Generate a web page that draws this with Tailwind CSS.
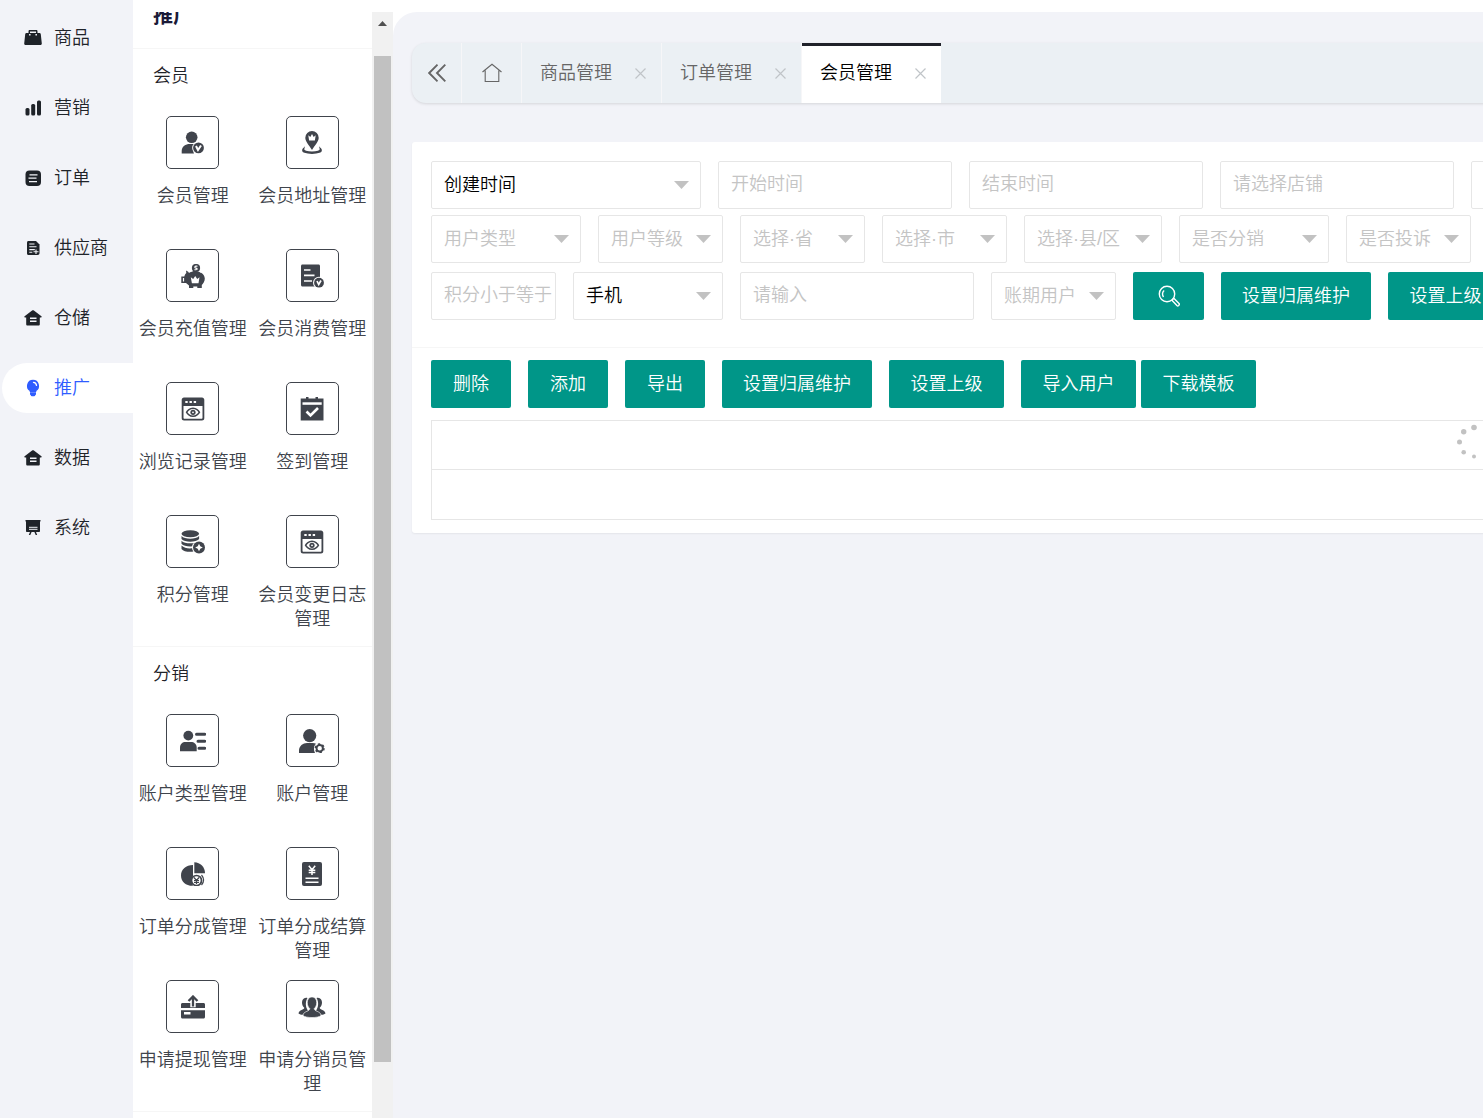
<!DOCTYPE html>
<html lang="zh-CN">
<head>
<meta charset="utf-8">
<title>会员管理</title>
<script src="https://cdn.jsdelivr.net/npm/@tailwindcss/browser@4"></script>
</head>
<body class="h-screen overflow-hidden bg-[#f2f3f8] font-['Liberation_Sans','Noto_Sans_CJK_SC',sans-serif] text-[18px] leading-6 font-[350] text-[#1f2329]">
<div class="flex h-full">

  <!-- Primary navigation -->
  <nav class="flex w-[133px] shrink-0 flex-col gap-5 pt-[13px] pl-0.5">
    <a href="#" class="flex h-[50px] shrink-0 items-center gap-3 rounded-l-full pl-[22px]">
      <svg class="size-[18px]" viewBox="0 0 18 18" fill="currentColor"><path d="M4.500 4V2.200C4.500 1.500 5 1 5.700 1h6.600c.7 0 1.200.5 1.200 1.200V4h1.800c.8 0 1.400.5 1.500 1.300l1 9.200c.1.900-.5 1.500-1.400 1.500H1.600C.7 16 .1 15.400.2 14.500l1-9.200C1.300 4.500 1.900 4 2.700 4zM6 4h6V2.500H6z"/><path d="M5.800 5v1.500M12.200 5v1.500" stroke="#f2f3f8" stroke-width="1.500"/></svg>
      <span>商品</span></a>
    <a href="#" class="flex h-[50px] shrink-0 items-center gap-3 rounded-l-full pl-[22px]">
      <svg class="size-[18px]" viewBox="0 0 18 18" fill="currentColor"><rect x="1.500" y="9" width="4" height="7.500" rx="1.500"/><rect x="7.200" y="5" width="4" height="11.500" rx="1.500"/><rect x="13" y="1.500" width="4" height="15" rx="1.500"/></svg>
      <span>营销</span></a>
    <a href="#" class="flex h-[50px] shrink-0 items-center gap-3 rounded-l-full pl-[22px]">
      <svg class="size-[18px]" viewBox="0 0 18 18" fill="currentColor"><rect x="1.500" y="1.500" width="15.500" height="15.500" rx="4"/><path d="M5.500 5.800h8M4.500 9.200h8M5 12.600h8" stroke="#f2f3f8" stroke-width="1.300"/></svg>
      <span>订单</span></a>
    <a href="#" class="flex h-[50px] shrink-0 items-center gap-3 rounded-l-full pl-[22px]">
      <svg class="size-[18px]" viewBox="0 0 18 18" fill="currentColor"><path d="M4.500 2H12l3.500 3.500V14c0 1.200-.7 2-2 2h-9c-1 0-1.500-.6-1.500-1.500v-11C3 2.600 3.500 2 4.500 2z"/><path d="M5.300 5h5.200M5.300 7.800h7.200M5.300 10.600h5.500M5.300 13.300h3M9.500 12.700h5M12 10.400v4.600" stroke="#f2f3f8" stroke-width="1.100"/></svg>
      <span>供应商</span></a>
    <a href="#" class="flex h-[50px] shrink-0 items-center gap-3 rounded-l-full pl-[22px]">
      <svg class="size-[18px]" viewBox="0 0 18 18" fill="currentColor"><path d="M8.100 1.500c.6-.5 1.200-.5 1.800 0l7.500 5.800c.6.5.4 1.200-.4 1.200h-1.200v6.700c0 .8-.5 1.300-1.300 1.300h-11c-.8 0-1.300-.5-1.300-1.300V8.500H1c-.8 0-1-.7-.4-1.200z"/><path d="M6 9.300h6.500M6 12.300h6.500" stroke="#f2f3f8" stroke-width="1.400"/></svg>
      <span>仓储</span></a>
    <a href="#" aria-current="page" class="flex h-[50px] shrink-0 items-center gap-3 rounded-l-full bg-white pl-[22px] text-[#2f5cff]">
      <svg class="size-[18px]" viewBox="0 0 18 18" fill="currentColor"><path d="M9 .8a6.100 6.100 0 0 0-3.300 11.200V13h6.600v-1A6.100 6.100 0 0 0 9 .8zM6 13.300h6v1.400c0 1-.3 1.300-.7 1.300 0 .9-.5 1.300-2.300 1.300s-2.300-.4-2.300-1.300c-.4 0-.7-.4-.7-1.300z"/><path d="M9.500 3.300c1.700.2 2.800 1.300 3 3" stroke="#fff" stroke-width="1.300" fill="none" stroke-linecap="round"/></svg>
      <span>推广</span></a>
    <a href="#" class="flex h-[50px] shrink-0 items-center gap-3 rounded-l-full pl-[22px]">
      <svg class="size-[18px]" viewBox="0 0 18 18" fill="currentColor"><path d="M8.100 1.500c.6-.5 1.200-.5 1.800 0l7.500 5.800c.6.5.4 1.200-.4 1.200h-1.200v6.700c0 .8-.5 1.300-1.300 1.300h-11c-.8 0-1.300-.5-1.300-1.300V8.500H1c-.8 0-1-.7-.4-1.200z"/><path d="M6 9.300h6.500M6 12.300h6.500" stroke="#f2f3f8" stroke-width="1.400"/></svg>
      <span>数据</span></a>
    <a href="#" class="flex h-[50px] shrink-0 items-center gap-3 rounded-l-full pl-[22px]">
      <svg class="size-[18px]" viewBox="0 0 18 18" fill="currentColor"><path d="M1.500 1h15v1.500H16V12c0 .7-.5 1-1 1H3c-.5 0-1-.3-1-1V2.500h-.5zM6 13h1.600l-1.300 3H4.800zM10.400 13H12l1.200 3h-1.500z"/><path d="M5 10.300h8.500M5 8.300h8.500" stroke="#f2f3f8" stroke-width="1"/></svg>
      <span>系统</span></a>
  </nav>

  <!-- Everything right of the navigation sits on a white sheet with a 12px top edge -->
  <div class="flex min-w-0 flex-1 bg-white pt-3">

    <!-- Secondary menu, scrolled a little so that its title is partly hidden -->
    <aside class="w-[239px] shrink-0 overflow-hidden text-[#40444c]">
      <h2 class="-mt-3 h-[49px] border-b border-[#f6f6f6] pt-1 pl-5 text-[20px] font-bold text-[#1a1a38]">推广</h2>

      <section class="border-b border-[#f6f6f6] pb-[15px]">
        <h3 class="mb-3.5 h-[53px] pl-5 leading-[55px] text-[#1f2329]">会员</h3>
        <div class="grid auto-rows-[116px] grid-cols-2 gap-y-[17px] text-center">
          <a href="#" class="flex flex-col items-center gap-[15px]">
            <span class="flex size-[53px] shrink-0 items-center justify-center rounded-[5px] border border-[#40444c]"><svg class="size-6" viewBox="0 0 24 24" fill="currentColor"><circle cx="10.700" cy="6.300" r="5.800"/><path d="M.7 22.500V20c0-4.500 4-7 8-7h3.500c1.200 0 2.300.3 3.300.7-2.500 1.600-4 5-2.500 8.800z"/><circle cx="17.500" cy="16.900" r="6.300" fill="#fff"/><circle cx="17.500" cy="16.900" r="5.400"/><path d="M15 15l2 4 3-4.500" fill="none" stroke="#fff" stroke-width="2"/></svg></span>
            <span>会员管理</span></a>
          <a href="#" class="flex flex-col items-center gap-[15px]">
            <span class="flex size-[53px] shrink-0 items-center justify-center rounded-[5px] border border-[#40444c]"><svg class="size-6" viewBox="0 0 24 24" fill="currentColor"><path d="M12 0a6.700 6.700 0 0 0-6.700 6.700C5.300 10.500 9 14 12 19c3-5 6.700-8.500 6.700-12.300A6.700 6.700 0 0 0 12 0z"/><path d="M8.300 4.300l2 1.600L12 3l1.700 2.900 2-1.600-.8 5.200H9.100z" fill="#fff"/><path d="M3.500 18c-5 5.500 22 5.500 17 0 1 4.500-18 4.500-17 0z" stroke="currentColor" stroke-width="1.600"/></svg></span>
            <span>会员地址管理</span></a>
          <a href="#" class="flex flex-col items-center gap-[15px]">
            <span class="flex size-[53px] shrink-0 items-center justify-center rounded-[5px] border border-[#40444c]"><svg class="size-6" viewBox="0 0 24 24" fill="currentColor"><path d="M5 6.500l3.500 2c5-3.500 15-1 15.300 6 0 3-1.500 5-3 6.500V24h-4.500v-1.500h-4V24H8v-2.500L5 19H.3v-6.500h3c.4-1.500 1-2.500 2-3.500z"/><path d="M7.500 8.200c4.500-2.500 9.500-2.500 13 .3" fill="none" stroke="#fff" stroke-width="1.300"/><circle cx="15" cy="4" r="4.100"/><path d="M16.500 2.300c-3-.8-3.500 1.500-1.500 1.800 2 .4 1.500 2.300-1.500 1.500" fill="none" stroke="#fff" stroke-width="1.100"/><path d="M9.800 13.300l2.400 1.800 2-3 2 3 2.300-1.800-1 6h-6.600z" fill="#fff"/><path d="M2.500 14v3.500" stroke="#fff" stroke-width="1.200"/></svg></span>
            <span>会员充值管理</span></a>
          <a href="#" class="flex flex-col items-center gap-[15px]">
            <span class="flex size-[53px] shrink-0 items-center justify-center rounded-[5px] border border-[#40444c]"><svg class="size-6" viewBox="0 0 24 24" fill="currentColor"><path d="M2.500.5h16c.9 0 1.500.6 1.500 1.500v20.500H2.500c-.9 0-1.500-.6-1.500-1.500V2C1 1.100 1.600.5 2.500.5z"/><path d="M4 6h6.500M4 11.300h10.500M4 17h8" stroke="#fff" stroke-width="1.700"/><circle cx="19" cy="18.700" r="6" fill="#fff"/><circle cx="19" cy="18.700" r="4.900"/><path d="M17 17l1.700 3.500 2.300-4" fill="none" stroke="#fff" stroke-width="1.700"/></svg></span>
            <span>会员消费管理</span></a>
          <a href="#" class="flex flex-col items-center gap-[15px]">
            <span class="flex size-[53px] shrink-0 items-center justify-center rounded-[5px] border border-[#40444c]"><svg class="size-6" viewBox="0 0 24 24" fill="currentColor"><path fill-rule="evenodd" d="M3 .5h18c1.300 0 2.300 1 2.300 2.300v18.400c0 1.300-1 2.300-2.300 2.300H3c-1.300 0-2.300-1-2.300-2.300V2.800C.7 1.500 1.700.5 3 .5zM2.500 9v11.700c0 .6.400 1 1 1h17c.6 0 1-.4 1-1V9z"/><path d="M4.300 5h2.400M8.500 5h2.400M12.700 5h2.400" stroke="#fff" stroke-width="2"/><path fill-rule="evenodd" d="M12 10.500c3.500 0 6 2.300 7.300 4.800-1.300 2.500-3.800 4.800-7.300 4.800s-6-2.300-7.300-4.800c1.300-2.500 3.800-4.800 7.300-4.800zm0 1.500c-2.500 0-4.300 1.500-5.500 3.300 1.200 1.800 3 3.300 5.500 3.300s4.300-1.500 5.500-3.300C16.300 13.500 14.500 12 12 12z"/><circle cx="12" cy="15.300" r="2.600"/><circle cx="12" cy="15.300" r=".9" fill="#fff"/></svg></span>
            <span>浏览记录管理</span></a>
          <a href="#" class="flex flex-col items-center gap-[15px]">
            <span class="flex size-[53px] shrink-0 items-center justify-center rounded-[5px] border border-[#40444c]"><svg class="size-6" viewBox="0 0 24 24" fill="currentColor"><path d="M.7 1.500h22.800v22H.7z"/><path d="M2.500 5.300h19.200v2.500H2.500z" fill="#fff"/><path d="M6 0h2.500v5H6zM15.500 0H18v5h-2.500z"/><path d="M6.500 14.500l4 4 7.500-7.500" fill="none" stroke="#fff" stroke-width="2.600"/></svg></span>
            <span>签到管理</span></a>
          <a href="#" class="flex flex-col items-center gap-[15px]">
            <span class="flex size-[53px] shrink-0 items-center justify-center rounded-[5px] border border-[#40444c]"><svg class="size-6" viewBox="0 0 24 24" fill="currentColor"><ellipse cx="9.300" cy="3.800" rx="8.800" ry="3.500"/><path d="M.5 6c3 3.500 14.500 3.500 17.600 0v3c-3 3.700-14.600 3.700-17.600 0zM.5 10.700c3 3.500 14.500 3.500 17.600 0v3c-3 3.700-14.600 3.700-17.600 0zM.5 15.500c3 3 8 3.500 12 2.500v3.500c-4 .8-10 .3-12-2.500z"/><circle cx="18" cy="17.500" r="7" fill="#fff"/><circle cx="18" cy="17.500" r="6"/><path d="M18 13.700l1.300 2.500 2.500 1.300-2.500 1.300-1.300 2.500-1.300-2.500-2.500-1.300 2.500-1.300z" fill="#fff"/></svg></span>
            <span>积分管理</span></a>
          <a href="#" class="flex flex-col items-center gap-[15px]">
            <span class="flex size-[53px] shrink-0 items-center justify-center rounded-[5px] border border-[#40444c]"><svg class="size-6" viewBox="0 0 24 24" fill="currentColor"><path fill-rule="evenodd" d="M3 .5h18c1.300 0 2.300 1 2.300 2.300v18.400c0 1.300-1 2.300-2.300 2.300H3c-1.300 0-2.300-1-2.300-2.300V2.800C.7 1.500 1.700.5 3 .5zM2.500 9v11.700c0 .6.400 1 1 1h17c.6 0 1-.4 1-1V9z"/><path d="M4.300 5h2.400M8.500 5h2.400M12.700 5h2.400" stroke="#fff" stroke-width="2"/><path fill-rule="evenodd" d="M12 10.500c3.500 0 6 2.300 7.300 4.800-1.300 2.500-3.800 4.800-7.300 4.800s-6-2.300-7.300-4.800c1.300-2.500 3.800-4.800 7.300-4.800zm0 1.500c-2.500 0-4.300 1.500-5.500 3.300 1.200 1.800 3 3.300 5.500 3.300s4.300-1.500 5.500-3.300C16.300 13.500 14.500 12 12 12z"/><circle cx="12" cy="15.300" r="2.600"/><circle cx="12" cy="15.300" r=".9" fill="#fff"/></svg></span>
            <span class="w-[110px]">会员变更日志管理</span></a>
        </div>
      </section>

      <section class="border-b border-[#f6f6f6] pb-[15px]">
        <h3 class="mb-3.5 h-[53px] pl-5 leading-[55px] text-[#1f2329]">分销</h3>
        <div class="grid auto-rows-[116px] grid-cols-2 gap-y-[17px] text-center">
          <a href="#" class="flex flex-col items-center gap-[15px]">
            <span class="flex size-[53px] shrink-0 items-center justify-center rounded-[5px] border border-[#40444c]"><svg class="h-6 w-[26px]" viewBox="0 0 26 24" fill="currentColor"><circle cx="8.300" cy="6.600" r="4.900"/><path d="M0 22.300v-3.800C0 15 2.500 13 5.500 13h5.500c3 0 5.700 2 5.700 5.500v3.800z"/><path d="M16.500 5.200h8.300M18 12.300h6.800M19 19.300h5.800" stroke="currentColor" stroke-width="3" stroke-linecap="round"/></svg></span>
            <span>账户类型管理</span></a>
          <a href="#" class="flex flex-col items-center gap-[15px]">
            <span class="flex size-[53px] shrink-0 items-center justify-center rounded-[5px] border border-[#40444c]"><svg class="h-6 w-[26px]" viewBox="0 0 26 24" fill="currentColor"><circle cx="10.700" cy="6.600" r="6.600"/><path d="M0 24v-2.500C0 17 4 14 8 14h5.500c1.500 0 2.700.3 4 1-2.300 2-3.200 5-1.500 9z"/><circle cx="20.700" cy="19.300" r="5.700" fill="#fff"/><circle cx="20.700" cy="19.300" r="3.200" fill="none" stroke="currentColor" stroke-width="2"/><circle cx="20.700" cy="19.300" r="4.300" fill="none" stroke="currentColor" stroke-width="1.600" stroke-dasharray="2.200 2.300"/></svg></span>
            <span>账户管理</span></a>
          <a href="#" class="flex flex-col items-center gap-[15px]">
            <span class="flex size-[53px] shrink-0 items-center justify-center rounded-[5px] border border-[#40444c]"><svg class="size-6" viewBox="0 0 24 24" fill="currentColor"><path d="M12 3v11l-2 4.500 2 5.300C5 24 0 19.500 0 13.400S5 3 12 3z"/><path d="M13.300.3C19.500.5 24 5 24 11.300H13.300z"/><path d="M13.500 12.500h8.300c1.500 1.700 2 3.500 1.700 5.500-.3 2.500-1.500 4.500-3.500 5.500h-6z" fill="#fff"/><circle cx="15.500" cy="18.500" r="5" fill="#fff" stroke="currentColor" stroke-width="1.700"/><path d="M20.500 13c2.500 3 2.500 7 0 10" fill="none" stroke="currentColor" stroke-width="1.200"/><path d="M13 15.500l2.500 3 2.500-3M15.500 18.500v3.500M13 18.500h5M13 20.300h5" fill="none" stroke="currentColor" stroke-width="1.200"/></svg></span>
            <span>订单分成管理</span></a>
          <a href="#" class="flex flex-col items-center gap-[15px]">
            <span class="flex size-[53px] shrink-0 items-center justify-center rounded-[5px] border border-[#40444c]"><svg class="size-6" viewBox="0 0 24 24" fill="currentColor"><rect x="2" y="0" width="20" height="24" rx="2"/><path d="M8.800 3.800l3.200 4 3.200-4M12 7.800V13M8.700 8.300h6.600M8.700 10.600h6.600" fill="none" stroke="#fff" stroke-width="1.500"/><path d="M5.500 16.300h13M5.500 20.300h13" stroke="#fff" stroke-width="1.500"/></svg></span>
            <span class="w-[110px]">订单分成结算管理</span></a>
          <a href="#" class="flex flex-col items-center gap-[15px]">
            <span class="flex size-[53px] shrink-0 items-center justify-center rounded-[5px] border border-[#40444c]"><svg class="size-6" viewBox="0 0 24 24" fill="currentColor"><path d="M1.500 8h7.800v4.300h5.400V8h7.800c.9 0 1.500.6 1.500 1.500V13H0V9.500C0 8.600.6 8 1.500 8z"/><path fill-rule="evenodd" d="M0 15.300h24V22c0 .9-.6 1.500-1.500 1.500h-21C.6 23.500 0 22.900 0 22zM3 17v2.500h6.500V17z"/><path d="M12 11.500V2M7.500 6L12 1.500 16.500 6" fill="none" stroke="currentColor" stroke-width="2.300"/></svg></span>
            <span>申请提现管理</span></a>
          <a href="#" class="flex flex-col items-center gap-[15px]">
            <span class="flex size-[53px] shrink-0 items-center justify-center rounded-[5px] border border-[#40444c]"><svg class="h-6 w-7" viewBox="0 0 28 24" fill="currentColor"><path d="M9.500 3C6 2 4 4.500 4 7.500c0 2 .8 4 2.300 5.300 0 2.200-5.300 2-5.800 5.700 1.500 1.300 3.500 1.300 5 1.200 1-2.200 3-3 4.500-4-2.500-3.500-3-8.500-.5-12.700zM18.500 3c3.500-1 5.500 1.500 5.500 4.500 0 2-.8 4-2.300 5.300 0 2.200 5.300 2 5.800 5.700-1.500 1.300-3.500 1.300-5 1.200-1-2.200-3-3-4.500-4 2.500-3.500 3-8.500.5-12.700z"/><path d="M14 2c-3.200 0-4.700 2.600-4.700 5.700 0 2.500 1 4.600 2.500 5.900 0 3.200-6.800 2.400-6.800 6.900 2.500 2.700 15.500 2.700 18 0 0-4.500-6.800-3.700-6.800-6.900 1.500-1.300 2.500-3.400 2.500-5.900C18.700 4.600 17.200 2 14 2z" stroke="#fff" stroke-width=".6"/></svg></span>
            <span class="w-[110px]">申请分销员管理</span></a>
        </div>
      </section>
    </aside>

    <!-- Menu scrollbar -->
    <div class="flex w-[21px] shrink-0 flex-col bg-[#f1f1f1] px-0.5 pb-14" aria-hidden="true">
      <div class="flex h-11 shrink-0 justify-center pt-[9px]"><svg class="h-[5px] w-[9px]" viewBox="0 0 9 5"><path d="M0 5L4.500 0 9 5z" fill="#505050"/></svg></div>
      <div class="flex-1 bg-[#c1c1c1]"></div>
    </div>

    <!-- Workspace -->
    <main class="min-w-0 flex-1 overflow-hidden rounded-tl-[24px] bg-[#f2f3f8] pt-[31px] pl-[19px]">
      <div class="flex h-[60px] min-w-[2123px] overflow-hidden rounded-l-[14px] bg-[#ebf0f4] text-[#666] shadow-[0_1px_3px_rgba(0,0,0,0.12)]">
        <button type="button" aria-label="收起" class="flex w-[50px] items-center justify-center border-r border-[#f6f6f8]"><svg class="h-[18px] w-[18px]" viewBox="0 0 18 18" fill="none" stroke="currentColor" stroke-width="1.900"><path d="M9.500.7L1.200 9l8.300 8.300M17.300.7L9 9l8.300 8.300"/></svg></button>
        <a href="#" aria-label="首页" class="flex w-[60px] items-center justify-center border-r border-[#f6f6f8]"><svg class="h-5 w-5" viewBox="0 0 20 20" fill="none" stroke="currentColor" stroke-width="1.100"><path d="M.5 9L10 1.200 19.500 9M3.200 7.500v11h13.600v-11"/></svg></a>
        <div class="flex w-[140px] items-center justify-between border-r border-[#f6f6f8] pr-[15px] pl-[18px]"><a href="#">商品管理</a><button type="button" aria-label="关闭商品管理"><svg class="size-[11px]" viewBox="0 0 11 11" stroke="#c0c4c8" stroke-width="1.200"><path d="M.5.5l10 10M10.500.5l-10 10"/></svg></button></div>
        <div class="flex w-[140px] items-center justify-between border-r border-[#f6f6f8] pr-[15px] pl-[18px]"><a href="#">订单管理</a><button type="button" aria-label="关闭订单管理"><svg class="size-[11px]" viewBox="0 0 11 11" stroke="#c0c4c8" stroke-width="1.200"><path d="M.5.5l10 10M10.500.5l-10 10"/></svg></button></div>
        <div class="flex w-[139px] items-center justify-between border-t-[3px] border-[#20222a] bg-white pr-[15px] pb-[3px] pl-[18px] text-black"><a href="#">会员管理</a><button type="button" aria-label="关闭会员管理"><svg class="size-[11px]" viewBox="0 0 11 11" stroke="#c0c4c8" stroke-width="1.200"><path d="M.5.5l10 10M10.500.5l-10 10"/></svg></button></div>
      </div>

      <div class="mt-[39px] min-w-[2123px] rounded-[3px] bg-white pb-[13px] shadow-[0_1px_2px_rgba(0,0,0,0.06)]">
        <form class="border-b border-[#f6f6f6] px-[19px] pt-[19px] pb-[27px] text-[#c4c4c4]">
          <div class="flex gap-[17px]">
            <div class="relative w-[270px]"><select aria-label="时间类型" class="h-12 w-full appearance-none rounded-[2px] border border-[#e6e6e6] bg-white pl-3 text-black"><option>创建时间</option></select><svg class="pointer-events-none absolute top-5 right-3 h-2 w-[15px]" viewBox="0 0 15 8"><path d="M0 0h15L7.500 8z" fill="#c2c2c2"/></svg></div>
            <input aria-label="开始时间" placeholder="开始时间" class="h-12 w-[234px] rounded-[2px] border border-[#e6e6e6] pb-0.5 pl-3 placeholder:text-[#c4c4c4]">
            <input aria-label="结束时间" placeholder="结束时间" class="h-12 w-[234px] rounded-[2px] border border-[#e6e6e6] pb-0.5 pl-3 placeholder:text-[#c4c4c4]">
            <input aria-label="店铺" placeholder="请选择店铺" class="h-12 w-[234px] rounded-[2px] border border-[#e6e6e6] pb-0.5 pl-3 placeholder:text-[#c4c4c4]">
            <input aria-label="关键字" class="h-12 w-[234px] rounded-[2px] border border-[#e6e6e6] pl-3">
          </div>
          <div class="mt-1.5 flex gap-[17px]">
            <div class="relative w-[150px]"><select aria-label="用户类型" class="h-12 w-full appearance-none rounded-[2px] border border-[#e6e6e6] bg-white pl-3"><option>用户类型</option></select><svg class="pointer-events-none absolute top-5 right-3 h-2 w-[15px]" viewBox="0 0 15 8"><path d="M0 0h15L7.500 8z" fill="#c2c2c2"/></svg></div>
            <div class="relative w-[125px]"><select aria-label="用户等级" class="h-12 w-full appearance-none rounded-[2px] border border-[#e6e6e6] bg-white pl-3"><option>用户等级</option></select><svg class="pointer-events-none absolute top-5 right-3 h-2 w-[15px]" viewBox="0 0 15 8"><path d="M0 0h15L7.500 8z" fill="#c2c2c2"/></svg></div>
            <div class="relative w-[125px]"><select aria-label="省" class="h-12 w-full appearance-none rounded-[2px] border border-[#e6e6e6] bg-white pl-3"><option>选择·省</option></select><svg class="pointer-events-none absolute top-5 right-3 h-2 w-[15px]" viewBox="0 0 15 8"><path d="M0 0h15L7.500 8z" fill="#c2c2c2"/></svg></div>
            <div class="relative w-[125px]"><select aria-label="市" class="h-12 w-full appearance-none rounded-[2px] border border-[#e6e6e6] bg-white pl-3"><option>选择·市</option></select><svg class="pointer-events-none absolute top-5 right-3 h-2 w-[15px]" viewBox="0 0 15 8"><path d="M0 0h15L7.500 8z" fill="#c2c2c2"/></svg></div>
            <div class="relative w-[138px]"><select aria-label="县/区" class="h-12 w-full appearance-none rounded-[2px] border border-[#e6e6e6] bg-white pl-3"><option>选择·县/区</option></select><svg class="pointer-events-none absolute top-5 right-3 h-2 w-[15px]" viewBox="0 0 15 8"><path d="M0 0h15L7.500 8z" fill="#c2c2c2"/></svg></div>
            <div class="relative w-[150px]"><select aria-label="是否分销" class="h-12 w-full appearance-none rounded-[2px] border border-[#e6e6e6] bg-white pl-3"><option>是否分销</option></select><svg class="pointer-events-none absolute top-5 right-3 h-2 w-[15px]" viewBox="0 0 15 8"><path d="M0 0h15L7.500 8z" fill="#c2c2c2"/></svg></div>
            <div class="relative w-[125px]"><select aria-label="是否投诉" class="h-12 w-full appearance-none rounded-[2px] border border-[#e6e6e6] bg-white pl-3"><option>是否投诉</option></select><svg class="pointer-events-none absolute top-5 right-3 h-2 w-[15px]" viewBox="0 0 15 8"><path d="M0 0h15L7.500 8z" fill="#c2c2c2"/></svg></div>
          </div>
          <div class="mt-[9px] flex gap-[17px]">
            <input aria-label="积分小于等于" placeholder="积分小于等于" class="h-12 w-[125px] rounded-[2px] border border-[#e6e6e6] pb-0.5 pl-3 placeholder:text-[#c4c4c4]">
            <div class="relative w-[150px]"><select aria-label="查询字段" class="h-12 w-full appearance-none rounded-[2px] border border-[#e6e6e6] bg-white pl-3 text-black"><option>手机</option></select><svg class="pointer-events-none absolute top-5 right-3 h-2 w-[15px]" viewBox="0 0 15 8"><path d="M0 0h15L7.500 8z" fill="#c2c2c2"/></svg></div>
            <input aria-label="查询内容" placeholder="请输入" class="h-12 w-[234px] rounded-[2px] border border-[#e6e6e6] pb-0.5 pl-3 placeholder:text-[#c4c4c4]">
            <div class="relative w-[125px]"><select aria-label="账期用户" class="h-12 w-full appearance-none rounded-[2px] border border-[#e6e6e6] bg-white pl-3"><option>账期用户</option></select><svg class="pointer-events-none absolute top-5 right-3 h-2 w-[15px]" viewBox="0 0 15 8"><path d="M0 0h15L7.500 8z" fill="#c2c2c2"/></svg></div>
            <button type="button" aria-label="搜索" class="flex h-12 w-[71px] items-center justify-center rounded-[2px] bg-[#009688]"><svg class="size-[22px]" viewBox="0 0 22 22" fill="none" stroke="#fff" stroke-width="1.400"><circle cx="9" cy="9" r="7.700"/><path d="M5.500 12c-1.500-2-1.300-5 .7-6.500M14.500 14.500l1.500-1 5 5c.7.700.2 1.500-.3 2-.5.400-1.200.6-1.800 0l-4.700-5z"/></svg></button>
            <button type="button" class="h-12 w-[150px] rounded-[2px] bg-[#009688] pb-px text-white">设置归属维护</button>
            <button type="button" class="h-12 w-[115px] rounded-[2px] bg-[#009688] pb-px text-white">设置上级</button>
          </div>
        </form>

        <div class="px-[19px] pt-3">
          <div class="flex gap-[17px] text-white">
            <button type="button" class="h-12 w-20 rounded-[2px] bg-[#009688] pb-px">删除</button>
            <button type="button" class="h-12 w-20 rounded-[2px] bg-[#009688] pb-px">添加</button>
            <button type="button" class="h-12 w-20 rounded-[2px] bg-[#009688] pb-px">导出</button>
            <button type="button" class="h-12 w-[150px] rounded-[2px] bg-[#009688] pb-px">设置归属维护</button>
            <button type="button" class="h-12 w-[115px] rounded-[2px] bg-[#009688] pb-px">设置上级</button>
            <div class="flex gap-[5px]">
              <button type="button" class="h-12 w-[115px] rounded-[2px] bg-[#009688] pb-px">导入用户</button>
              <button type="button" class="h-12 w-[115px] rounded-[2px] bg-[#009688] pb-px">下载模板</button>
            </div>
          </div>
          <div class="relative mt-3">
            <table aria-label="会员列表" class="w-full border-collapse border border-[#e6e6e6]">
              <thead><tr class="h-[49px] border-b border-[#e6e6e6]"><th></th></tr></thead>
              <tbody><tr class="h-[50px]"><td></td></tr></tbody>
            </table>
            <!-- Loading spinner over the middle of the table -->
            <svg class="absolute top-1 left-1/2 size-9 -translate-x-1/2" viewBox="0 0 36 36" fill="#c2c2c2"><circle cx="18" cy="3.500" r="2.800"/><circle cx="7.700" cy="7.700" r="2.700"/><circle cx="3.500" cy="18" r="2.500"/><circle cx="7.700" cy="28.300" r="2.300"/><circle cx="18" cy="32.500" r="2"/><circle cx="29" cy="28.300" r="1"/><circle cx="32.500" cy="18" r="1"/></svg>
          </div>
        </div>
      </div>
    </main>
  </div>
</div>
</body>
</html>
